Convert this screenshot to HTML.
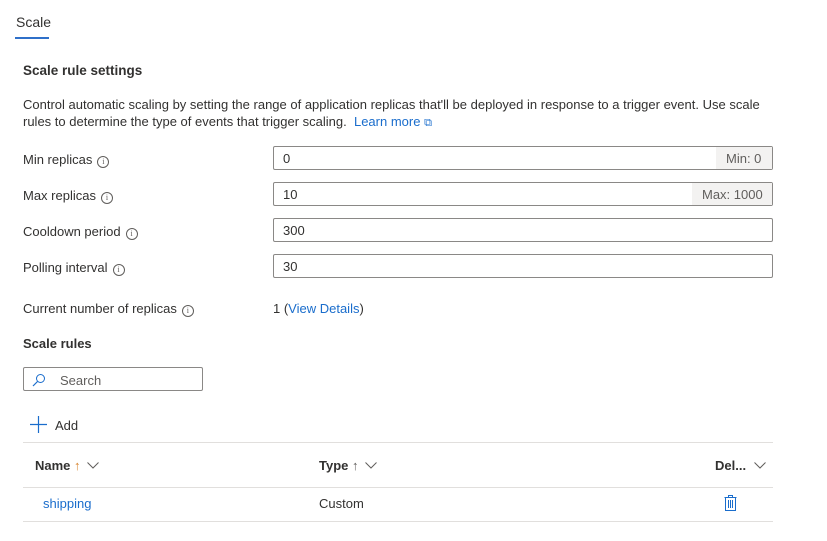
<!DOCTYPE html>
<html><head><style>
*{box-sizing:border-box;margin:0;padding:0}
body{width:827px;height:541px;background:#fff;font-family:"Liberation Sans",sans-serif;font-size:13px;color:#323130;position:relative;overflow:hidden}
.a{position:absolute;white-space:nowrap}
.link{color:#1a6dcc}
.box{position:absolute;left:273px;width:500px;height:24px;border:1px solid #8a8886;border-radius:2px}
.box span{position:absolute;left:9px;top:4px}
.suf{position:absolute;right:0;top:0;bottom:0;background:#f3f2f1;color:#605e5c;padding:4px 8px 0 10px}
.i{display:inline-block;width:12px;height:12px;border:1px solid #605e5c;border-radius:50%;font-size:8px;line-height:10px;text-align:center;margin-left:5px;vertical-align:-1px;color:#605e5c;font-family:"Liberation Serif",serif;position:relative;top:-1px}
.hr{position:absolute;left:23px;width:750px;height:1px;background:#e1dfdd}
.chev{display:inline-block;vertical-align:1px;margin-left:6px}
</style></head><body>
<div class="a" style="left:16px;top:14px;font-size:14px;font-weight:500">Scale</div>
<div class="a" style="left:15px;top:37px;width:34px;height:2px;background:#2f70c9"></div>
<div class="a" style="left:23px;top:63px;font-weight:bold;font-size:13.5px">Scale rule settings</div>
<div class="a" style="left:23px;top:96px;line-height:17px">Control automatic scaling by setting the range of application replicas that'll be deployed in response to a trigger event. Use scale<br>rules to determine the type of events that trigger scaling.&nbsp; <span class="link">Learn more <span style="font-size:11px">⧉</span></span></div>
<div class="a" style="left:23px;top:152px">Min replicas<span class="i">i</span></div>
<div class="a" style="left:23px;top:188px">Max replicas<span class="i">i</span></div>
<div class="a" style="left:23px;top:224px">Cooldown period<span class="i">i</span></div>
<div class="a" style="left:23px;top:260px">Polling interval<span class="i">i</span></div>
<div class="box" style="top:146px"><span>0</span><div class="suf" style="width:56px">Min: 0</div></div>
<div class="box" style="top:182px"><span>10</span><div class="suf" style="width:80px">Max: 1000</div></div>
<div class="box" style="top:218px"><span>300</span></div>
<div class="box" style="top:254px"><span>30</span></div>
<div class="a" style="left:23px;top:301px">Current number of replicas<span class="i">i</span></div>
<div class="a" style="left:273px;top:301px">1 (<span class="link">View Details</span>)</div>
<div class="a" style="left:23px;top:336px;font-weight:bold">Scale rules</div>
<div class="a" style="left:23px;top:367px;width:180px;height:24px;border:1px solid #8a8886;border-radius:2px">
<svg style="position:absolute;left:8px;top:5px" width="14" height="14" viewBox="0 0 14 14"><circle cx="8.5" cy="5.5" r="4" fill="none" stroke="#1a6dcc" stroke-width="1"/><path d="M5.5 8.5L1 13" stroke="#1a6dcc" stroke-width="1.2"/></svg>
<span style="position:absolute;left:36px;top:5px;color:#605e5c">Search</span></div>
<svg class="a" style="left:30px;top:416px" width="17" height="17" viewBox="0 0 17 17"><path d="M8.5 0V17M0 8.5H17" stroke="#1a6dcc" stroke-width="1.2"/></svg>
<div class="a" style="left:55px;top:418px">Add</div>
<div class="hr" style="top:442px"></div>
<div class="a" style="left:35px;top:458px"><b>Name</b> <span style="color:#d8842e">↑</span><svg class="chev" width="12" height="7" viewBox="0 0 12 7"><path d="M0.5 0.5L6 6L11.5 0.5" fill="none" stroke="#605e5c"/></svg></div>
<div class="a" style="left:319px;top:458px"><b>Type</b> <span style="color:#605e5c">↑</span><svg class="chev" width="12" height="7" viewBox="0 0 12 7"><path d="M0.5 0.5L6 6L11.5 0.5" fill="none" stroke="#605e5c"/></svg></div>
<div class="a" style="left:715px;top:458px"><b>Del...</b><svg class="chev" width="12" height="7" viewBox="0 0 12 7" style="margin-left:8px"><path d="M0.5 0.5L6 6L11.5 0.5" fill="none" stroke="#605e5c"/></svg></div>
<div class="hr" style="top:487px"></div>
<div class="a link" style="left:43px;top:496px">shipping</div>
<div class="a" style="left:319px;top:496px">Custom</div>
<svg class="a" style="left:724px;top:495px" width="13" height="16" viewBox="0 0 13 16"><path d="M0.5 2.5H12.5M4.5 2.5V0.5H8.5V2.5M1.5 2.5V15.5H11.5V2.5M4.5 5V13M6.5 5V13M8.5 5V13" fill="none" stroke="#1a6dcc" stroke-width="1"/></svg>
<div class="hr" style="top:521px"></div>
</body></html>
